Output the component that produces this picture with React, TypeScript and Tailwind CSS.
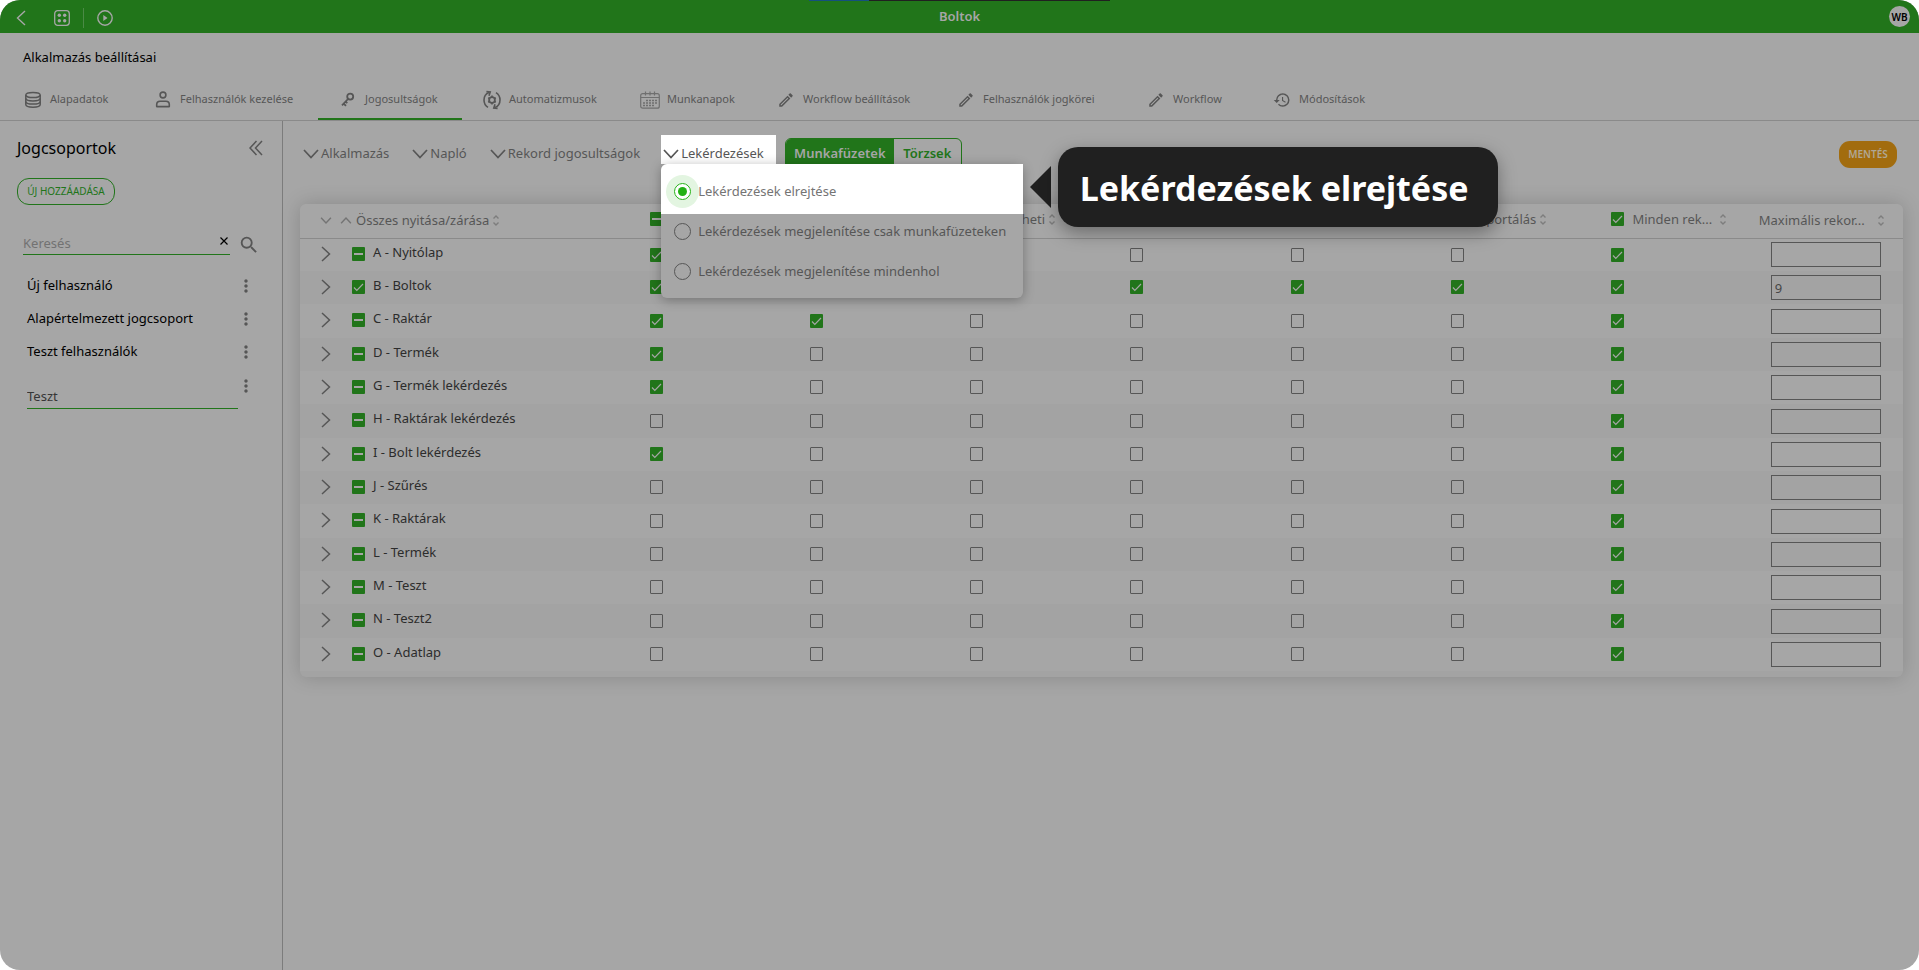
import React, { useEffect, useRef } from 'react';
import clsx from 'clsx';
import { MdHistory, MdMoreVert, MdOutlineEdit, MdSearch } from 'react-icons/md';

type CheckState = 'on' | 'off' | 'mixed';

const tabs = [
  { label: 'Alapadatok', icon: 'database', width: 'w-[130px]' },
  { label: 'Felhasználók kezelése', icon: 'user', width: 'w-[185px]' },
  { label: 'Jogosultságok', icon: 'key', width: 'w-[144px]', active: true },
  { label: 'Automatizmusok', icon: 'auto', width: 'w-[158px]' },
  { label: 'Munkanapok', icon: 'calendar', width: 'w-[136px]' },
  { label: 'Workflow beállítások', icon: 'pencil', width: 'w-[180px]' },
  { label: 'Felhasználók jogkörei', icon: 'pencil', width: 'w-[190px]' },
  { label: 'Workflow', icon: 'pencil', width: 'w-[126px]' },
  { label: 'Módosítások', icon: 'history', width: 'w-[136px]' },
];

const groups = ['Új felhasználó', 'Alapértelmezett jogcsoport', 'Teszt felhasználók'];

// cells: x = ticked, . = empty
const rows = [
  { name: 'A - Nyitólap', state: 'mixed', cells: 'x.....x' },
  { name: 'B - Boltok', state: 'on', cells: 'xxxxxxx', max: '9' },
  { name: 'C - Raktár', state: 'mixed', cells: 'xx....x' },
  { name: 'D - Termék', state: 'mixed', cells: 'x.....x' },
  { name: 'G - Termék lekérdezés', state: 'mixed', cells: 'x.....x' },
  { name: 'H - Raktárak lekérdezés', state: 'mixed', cells: '......x' },
  { name: 'I - Bolt lekérdezés', state: 'mixed', cells: 'x.....x' },
  { name: 'J - Szűrés', state: 'mixed', cells: '......x' },
  { name: 'K - Raktárak', state: 'mixed', cells: '......x' },
  { name: 'L - Termék', state: 'mixed', cells: '......x' },
  { name: 'M - Teszt', state: 'mixed', cells: '......x' },
  { name: 'N - Teszt2', state: 'mixed', cells: '......x' },
  { name: 'O - Adatlap', state: 'mixed', cells: '......x' },
];

const headers: { label: string; state: CheckState }[] = [
  { label: '', state: 'mixed' },
  { label: '', state: 'mixed' },
  { label: 'Törölheti', state: 'mixed' },
  { label: '', state: 'mixed' },
  { label: '', state: 'mixed' },
  { label: 'Exportálás', state: 'mixed' },
  { label: 'Minden rek...', state: 'on' },
];

const options = [
  'Lekérdezések elrejtése',
  'Lekérdezések megjelenítése csak munkafüzeteken',
  'Lekérdezések megjelenítése mindenhol',
];

function TabIcon({ name }: { name: string }) {
  if (name === 'pencil') return <MdOutlineEdit className="size-[18px]" />;
  if (name === 'history') return <MdHistory className="size-[18px]" />;
  if (name === 'database') {
    return (
      <svg width="18" height="18" viewBox="0 0 18 18" fill="none" stroke="currentColor" strokeWidth="1.5">
        <ellipse cx="9" cy="4" rx="7.2" ry="2.6" />
        <path d="M1.8 4v9.6c0 1.5 3.2 2.7 7.2 2.7s7.2-1.2 7.2-2.7V4" />
        <path d="M1.8 7.2c0 1.5 3.2 2.7 7.2 2.7s7.2-1.2 7.2-2.7M1.8 10.4c0 1.5 3.2 2.7 7.2 2.7s7.2-1.2 7.2-2.7" />
      </svg>
    );
  }
  if (name === 'user') {
    return (
      <svg width="16" height="17" viewBox="0 0 16 17" fill="none" stroke="currentColor" strokeWidth="1.6">
        <circle cx="8" cy="4" r="2.9" />
        <path d="M1.7 15.6v-2.1c0-2 1.5-3.3 3.4-3.3h5.8c1.9 0 3.4 1.3 3.4 3.3v2.1z" strokeLinejoin="round" />
      </svg>
    );
  }
  if (name === 'key') {
    return (
      <svg width="14" height="16" viewBox="0 0 14 16" fill="none" stroke="currentColor" strokeWidth="1.8">
        <circle cx="9.2" cy="4.6" r="3" />
        <path d="M7 7 1 13.4M2.7 11.6l2.3 2.3M4.7 9.6l1.6 1.6" />
      </svg>
    );
  }
  if (name === 'auto') {
    return (
      <svg width="18" height="20" viewBox="0 0 18 20" fill="none" stroke="currentColor" strokeWidth="1.6">
        <circle cx="9" cy="10" r="2.9" strokeWidth="1.8" />
        <path d="M9 5.6v1.6M9 12.8v1.6M5.2 7.8l1.4.8M11.4 11.4l1.4.8M5.2 12.2l1.4-.8M11.4 8.6l1.4-.8" />
        <path d="M5 17.4C2.5 15.8 1 13.2 1 10s1.7-6.2 5-7.5M13 2.6c2.5 1.6 4 4.2 4 7.4s-1.7 6.2-5 7.5" />
        <path d="M3.4 1.6 7.2 2 6 5.8M14.600 18.4 10.8 18l1.2-3.8" />
      </svg>
    );
  }
  return (
    <svg width="20" height="18" viewBox="0 0 20 18" fill="none" stroke="currentColor" strokeWidth="1.2" className="text-[#6f6f6f]">
      <rect x=".7" y="2.7" width="18.6" height="14.5" rx="2" />
      <path d="M.7 6.5h18.6M5.5.5v4M10 .5v4M14.5.5v4" />
      <path d="M6 9.5h11M3 12h14M3 14.5h11" strokeWidth="1.7" strokeDasharray="2 1" />
    </svg>
  );
}

function Chevron({ className }: { className?: string }) {
  return (
    <svg width="16" height="10" viewBox="0 0 16 10" fill="none" stroke="currentColor" strokeWidth="1.7" className={clsx('shrink-0', className)}>
      <path d="m1 1 7 7.5L15 1" />
    </svg>
  );
}

function SortIcon() {
  return (
    <svg width="6" height="11" viewBox="0 0 6 11" fill="none" stroke="currentColor" strokeWidth="1.4" className="shrink-0 text-[#7d7d7d]">
      <path d="M.5 3.5 3 1l2.500 2.5M.5 7.5 3 10l2.500-2.5" />
    </svg>
  );
}

function Check({ state, label, className }: { state: CheckState; label: string; className?: string }) {
  const ref = useRef<HTMLInputElement>(null);

  useEffect(() => {
    if (ref.current) ref.current.indeterminate = state === 'mixed';
  }, [state]);

  return (
    <span className={clsx('inline-grid h-3.5 w-[13px] shrink-0', className)}>
      <input
        ref={ref}
        type="checkbox"
        aria-label={label}
        defaultChecked={state === 'on'}
        className={clsx(
          'col-start-1 row-start-1 h-full w-full appearance-none rounded-[1px]',
          state === 'off' ? 'border border-[#565656]' : 'bg-[#21751a]'
        )}
      />
      {state !== 'off' && (
        <svg viewBox="0 0 13 14" fill="none" stroke="#a6a6a6" className="pointer-events-none col-start-1 row-start-1">
          {state === 'on' ? (
            <path d="m2 7.5 2.800 2.8L11 4" strokeWidth="1.2" />
          ) : (
            <path d="M2 7h9" strokeWidth="2" />
          )}
        </svg>
      )}
    </span>
  );
}

function TopBar() {
  return (
    <header className="relative grid h-[33px] grid-cols-3 items-center bg-[#21751a] text-[#a6a6a6]">
      <div className="absolute top-0 left-1/2 -ml-[151px] flex h-px w-[301px] bg-[#202020]">
        <span className="w-[60px] bg-[#15507f]" />
      </div>
      <div className="flex items-center pt-0.5 pl-4">
        <button aria-label="Vissza">
          <svg width="10" height="16" viewBox="0 0 10 16" fill="none" stroke="currentColor" strokeWidth="1.4">
            <path d="M9 1 1.5 8 9 15" />
          </svg>
        </button>
        <button aria-label="Alkalmazások" className="ml-7">
          <svg width="16" height="16" viewBox="0 0 16 16" fill="none" stroke="currentColor" strokeWidth="1.3">
            <rect x=".7" y=".7" width="14.6" height="14.6" rx="3" />
            <g fill="currentColor" stroke="none">
              <circle cx="5.3" cy="5.3" r="1.7" />
              <circle cx="10.7" cy="5.3" r="1.7" />
              <circle cx="5.3" cy="10.7" r="1.7" />
              <circle cx="10.7" cy="10.7" r="1.7" />
            </g>
          </svg>
        </button>
        <span className="mx-[13px] h-5 w-px bg-[#4b8a46]" />
        <button aria-label="Indítás">
          <svg width="16" height="16" viewBox="0 0 16 16" fill="none" stroke="currentColor" strokeWidth="1.4">
            <circle cx="8" cy="8" r="7.2" />
            <path d="M6.3 4.9v6.2L10.5 8z" fill="currentColor" stroke="none" />
          </svg>
        </button>
      </div>
      <h1 className="text-center text-[13px] font-semibold">Boltok</h1>
      <div className="flex justify-end pr-[9px]">
        <button className="size-[21px] rounded-full bg-[#a6a6a6] text-center text-[10px] leading-none font-semibold text-black">WB</button>
      </div>
    </header>
  );
}

function Sidebar() {
  return (
    <aside className="w-[283px] shrink-0 border-r border-[#7c7c7c] pt-4 text-[13px] text-black">
      <div className="flex items-center justify-between pr-[19px] pl-[17px]">
        <h2 className="text-base leading-[22px]">Jogcsoportok</h2>
        <button aria-label="Panel bezárása" className="text-[#565656]">
          <svg width="14" height="16" viewBox="0 0 14 16" fill="none" stroke="currentColor" strokeWidth="1.5">
            <path d="M7.5 1 1 8l6.5 7M13 1 6.500 8l6.5 7" />
          </svg>
        </button>
      </div>
      <button className="mt-[19px] ml-[17px] h-[27px] w-[98px] rounded-xl border border-[#21751a] text-[10px] text-[#21751a]">
        ÚJ HOZZÁADÁSA
      </button>

      <div className="mt-[25px] flex items-center pl-[23px]">
        <div className="flex h-[23px] w-[207px] border-b border-[#21751a]">
          <input aria-label="Keresés" placeholder="Keresés" className="min-w-0 flex-1 pt-0.5 outline-none placeholder:text-[#727272]" />
          <button aria-label="Törlés" className="pr-0.5 pb-1">
            <svg width="8" height="8" viewBox="0 0 8 8" stroke="#000" strokeWidth="1.2">
              <path d="m.5.5 7 7M7.5.5l-7 7" />
            </svg>
          </button>
        </div>
        <button aria-label="Keresés indítása" className="ml-2 pt-1">
          <MdSearch className="size-[22px] text-[#565656]" />
        </button>
      </div>

      <ul className="mt-[13px]">
        {groups.map((group) => (
          <li key={group} className="flex h-[33px] items-center justify-between pr-[26px] pl-[27px]">
            <a href="#">{group}</a>
            <button aria-label={`${group} menü`}>
              <MdMoreVert className="size-5 text-[#565656]" />
            </button>
          </li>
        ))}
        <li className="flex items-start justify-between pr-[26px] pl-[27px] pt-2">
          <input aria-label="Jogcsoport neve" defaultValue="Teszt" className="h-[33px] w-[211px] border-b border-[#21751a] pt-2 text-[#363636] outline-none" />
          <button aria-label="Teszt menü" className="-ml-1">
            <MdMoreVert className="size-5 text-[#565656]" />
          </button>
        </li>
      </ul>
    </aside>
  );
}

function QueryMenu() {
  return (
    <div className="absolute top-full left-0 z-20 w-[362px] rounded-md bg-[#a6a6a6] pb-[7px] shadow-[0_2px_12px_rgba(0,0,0,0.3)]">
      {options.map((option, i) => (
        <label
          key={option}
          className={clsx(
            'flex items-center pl-[13px] leading-5 whitespace-nowrap',
            i === 0 && 'h-[50px] rounded-tl-md bg-white pt-1 text-[#747474]',
            i === 1 && 'h-[37px] pb-[3px] text-[#565656]',
            i === 2 && 'h-10 text-[#565656]'
          )}
        >
          <input
            type="radio"
            name="query"
            defaultChecked={i === 0}
            className={clsx(
              'grid size-[17px] shrink-0 appearance-none place-items-center rounded-full border',
              i === 0
                ? 'border-[#22b114] shadow-[0_0_0_8px_#e3f5e1] before:size-[9px] before:rounded-full before:bg-[#22b114]'
                : 'border-[#565656]'
            )}
          />
          <span className="ml-[7px]">{option}</span>
        </label>
      ))}
      <div role="tooltip" className="absolute top-[-17px] left-full ml-[7px] flex items-center">
        <svg width="21" height="42" viewBox="0 0 21 42" fill="#202020">
          <path d="M21 0v42L0 21z" />
        </svg>
        <div className="ml-[7px] flex h-20 w-[440px] items-center justify-center rounded-[20px] bg-[#202020] pt-0.5 pr-2 text-[34px] font-bold whitespace-nowrap text-white shadow-[0_6px_18px_rgba(0,0,0,0.35)]">
          Lekérdezések elrejtése
        </div>
      </div>
    </div>
  );
}

function Toolbar() {
  return (
    <div className="flex items-start pt-3.5 pr-[22px] pl-[18px] text-[13px] text-[#565656]">
      <div className="flex gap-[9px]">
        {['Alkalmazás', 'Napló', 'Rekord jogosultságok', 'Lekérdezések'].map((label) => {
          const open = label === 'Lekérdezések';
          return (
            <div key={label} className="relative">
              <button className={clsx('flex h-[29px] items-center gap-0.5 pt-2 pr-3 pl-0.5', open && 'bg-white')}>
                <Chevron />
                {label}
              </button>
              {open && <QueryMenu />}
            </div>
          );
        })}
      </div>
      <div className="mt-[3px] ml-[9px] flex h-8 w-[177px] overflow-hidden rounded-md border border-[#21751a] font-semibold">
        <button className="flex-1 bg-[#21751a] text-[#a6a6a6]">Munkafüzetek</button>
        <button className="w-[67px] text-[#21751a]">Törzsek</button>
      </div>
      <button className="mt-1.5 ml-auto h-[27px] w-[58px] rounded-[11px] bg-[#a26c0e] text-[10px] font-semibold text-[#b0a794]">MENTÉS</button>
    </div>
  );
}

function PermissionTable() {
  return (
    <div className="mt-[34px] mr-4 ml-[17px] rounded-md bg-[#a3a3a3] pb-1.5 shadow-[0_0_20px_rgba(0,0,0,0.18)]">
      <table className="w-full table-fixed text-left text-[13px] text-[#2c2c2c]">
        <colgroup>
          <col className="w-1/5" />
        </colgroup>
        <thead>
          <tr className="h-[34px] bg-[#a6a6a6] text-[#565656]">
            <th className="rounded-tl-md border-b border-[#8a8a8a] pl-5 font-normal">
              <div className="flex items-center">
                <button aria-label="Összes nyitása">
                  <Chevron className="h-[7px] w-3 stroke-2 text-[#747474]" />
                </button>
                <button aria-label="Összes zárása" className="ml-2">
                  <Chevron className="h-[7px] w-3 rotate-180 stroke-2 text-[#747474]" />
                </button>
                <span className="mr-1 ml-1">Összes nyitása/zárása</span>
                <SortIcon />
              </div>
            </th>
            {headers.map((h, i) => (
              <th key={i} className="border-b border-[#8a8a8a] pb-[3px] pl-[29px] font-normal">
                <div className="flex items-center whitespace-nowrap">
                  <Check state={h.state} label={h.label || `${i + 1}. oszlop`} />
                  <span className={clsx('ml-2', i === 6 ? 'mr-2' : 'mr-1')}>{h.label}</span>
                  {h.label && <SortIcon />}
                </div>
              </th>
            ))}
            <th className="rounded-tr-md border-b border-[#8a8a8a] pr-[19px] pl-4 font-normal">
              <div className="flex items-center justify-between whitespace-nowrap">
                Maximális rekor...
                <SortIcon />
              </div>
            </th>
          </tr>
        </thead>
        <tbody>
          {rows.map((row) => (
            <tr key={row.name} className="h-[33px] odd:bg-[#a6a6a6] even:bg-[#a3a3a3] nth-[3n]:h-[34px]">
              <td className="pb-0.5 pl-[21px]">
                <div className="flex items-center">
                  <button aria-label={`${row.name} kinyitása`} className="text-[#565656]">
                    <svg width="10" height="16" viewBox="0 0 10 16" fill="none" stroke="currentColor" strokeWidth="1.5">
                      <path d="m1 1 7.5 7L1 15" />
                    </svg>
                  </button>
                  <Check state={row.state as CheckState} label={row.name} className="ml-[21px]" />
                  <span className="ml-2 pb-0.5">{row.name}</span>
                </div>
              </td>
              {row.cells.split('').map((c, i) => (
                <td key={i} className="pb-0.5 pl-[29px]">
                  <Check state={c === 'x' ? 'on' : 'off'} label={`${row.name} ${headers[i].label}`} className="align-middle" />
                </td>
              ))}
              <td className="pl-7">
                <input
                  aria-label={`${row.name} maximális rekord`}
                  defaultValue={row.max}
                  className="block h-[25px] w-[110px] border border-[#565656] px-[3px] text-[#464646]"
                />
              </td>
            </tr>
          ))}
        </tbody>
      </table>
    </div>
  );
}

export default function App() {
  return (
    <div className="flex min-h-screen flex-col overflow-hidden rounded-[20px] bg-[#a6a6a6] font-['Noto_Sans','Open_Sans',sans-serif]">
      <TopBar />
      <h2 className="pt-3.5 pl-[23px] text-[13px] leading-5 text-black">Alkalmazás beállításai</h2>
      <nav className="mt-3.5 flex h-10 border-b border-[#8a8a8a] pl-[3px] text-[11px] text-[#565656]">
        {tabs.map((tab) => (
          <a
            key={tab.label}
            href="#"
            className={clsx(
              'flex shrink-0 items-center gap-[7px] border-b-2 pl-5 whitespace-nowrap',
              tab.width,
              tab.active ? 'border-[#21751a]' : 'border-transparent'
            )}
          >
            <span className="flex w-5 justify-center">
              <TabIcon name={tab.icon} />
            </span>
            {tab.label}
          </a>
        ))}
      </nav>
      <div className="flex flex-1">
        <Sidebar />
        <main className="min-w-0 flex-1">
          <Toolbar />
          <PermissionTable />
        </main>
      </div>
    </div>
  );
}
